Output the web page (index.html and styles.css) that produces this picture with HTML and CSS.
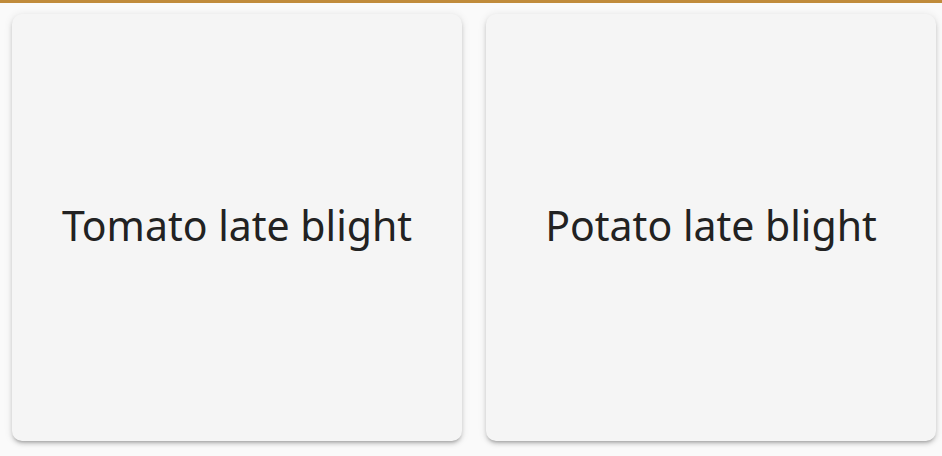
FILE: index.html
```html
<!DOCTYPE html>
<html>
<head>
<meta charset="utf-8">
<link rel="stylesheet" href="styles.css">
</head>
<body>
<div class="topbar"></div>
<main class="grid">
  <div class="card"><span class="label">Tomato late blight</span></div>
  <div class="card"><span class="label">Potato late blight</span></div>
</main>
</body>
</html>
```
FILE: styles.css
```css
html, body {
  margin: 0;
  padding: 0;
  background: #fafafa;
  height: 100%;
  overflow: hidden;
}
.topbar {
  height: 3px;
  background: #c08b3b;
}
.grid {
  display: grid;
  grid-template-columns: 450px 450px;
  column-gap: 24px;
  padding: 11px 0 0 12px;
}
.card {
  height: 427px;
  background: #f5f5f5;
  border-radius: 10px;
  box-shadow: 0 3px 3px -2px rgba(0,0,0,0.2), 0 3px 4px 0 rgba(0,0,0,0.14), 0 1px 8px 0 rgba(0,0,0,0.10);
  display: flex;
  align-items: center;
  justify-content: center;
}
.label {
  font-family: "Noto Sans", Roboto, sans-serif;
  font-size: 41px;
  line-height: 1;
  color: #222222;
  padding-bottom: 4px;
}
```
